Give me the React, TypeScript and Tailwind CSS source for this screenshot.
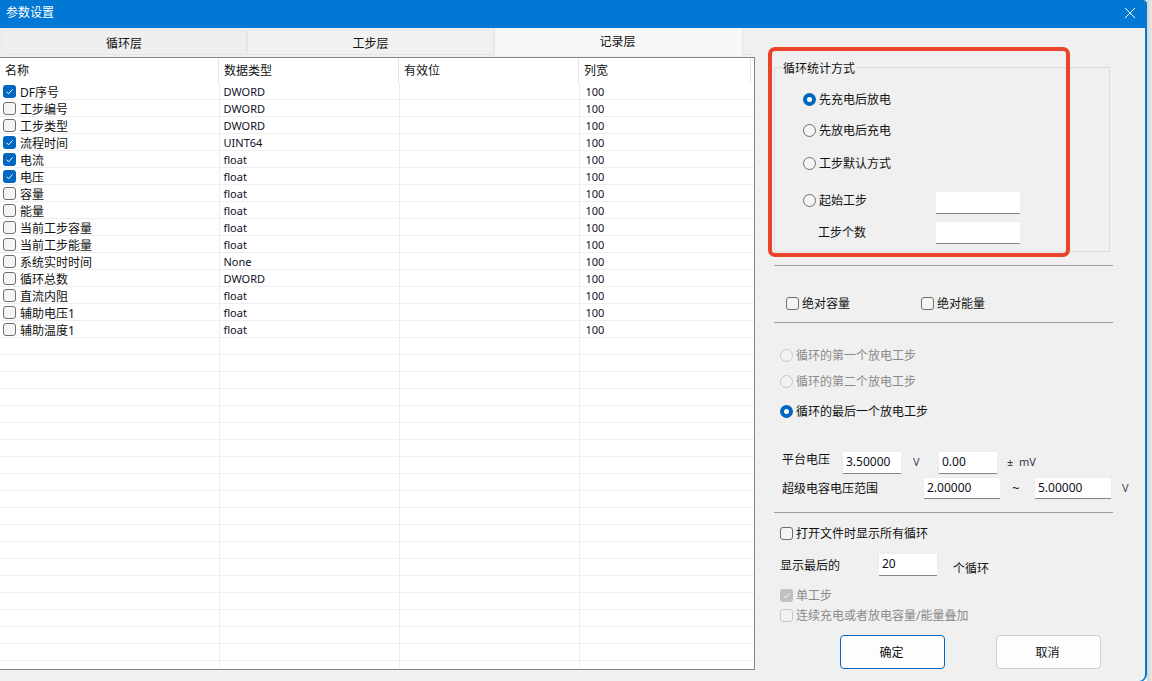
const rows: [string, string, boolean][] = [
  ["DF序号", "DWORD", true],
  ["工步编号", "DWORD", false],
  ["工步类型", "DWORD", false],
  ["流程时间", "UINT64", true],
  ["电流", "float", true],
  ["电压", "float", true],
  ["容量", "float", false],
  ["能量", "float", false],
  ["当前工步容量", "float", false],
  ["当前工步能量", "float", false],
  ["系统实时时间", "None", false],
  ["循环总数", "DWORD", false],
  ["直流内阻", "float", false],
  ["辅助电压1", "float", false],
  ["辅助温度1", "float", false],
];
const allRows = Array.from({ length: 35 }, (_, i) => rows[i] ?? null);

function Check({ on, off }: { on?: boolean; off?: boolean }) {
  if (on) {
    return (
      <span className={`flex h-[13px] w-[13px] shrink-0 items-center justify-center rounded-[3px] ${off ? "bg-[#c0c0c0]" : "bg-[#0067c0]"}`}>
        <svg width="9" height="9" viewBox="0 0 9 9" fill="none" stroke="#ffffff" strokeWidth="1">
          <path d="M1.5 4.7 L3.6 6.8 L7.6 2.4" />
        </svg>
      </span>
    );
  }
  return <span className={`h-[13px] w-[13px] shrink-0 rounded-[3px] border ${off ? "border-[#c8c8c8] bg-[#f2f2f2]" : "border-[#6f6f6f] bg-[#f5f5f5]"}`} />;
}

function Radio({ on, off }: { on?: boolean; off?: boolean }) {
  if (on) {
    return (
      <span className="flex h-[13px] w-[13px] shrink-0 items-center justify-center rounded-full bg-[#0067c0]">
        <span className="h-[5px] w-[5px] rounded-full bg-white" />
      </span>
    );
  }
  return <span className={`h-[13px] w-[13px] shrink-0 rounded-full border ${off ? "border-[#c8c8c8] bg-[#f2f2f2]" : "border-[#6f6f6f] bg-[#f5f5f5]"}`} />;
}

function Field({ w, h = "h-[22px]", value = "" }: { w: string; h?: string; value?: string }) {
  return (
    <div className={`${w} ${h} flex shrink-0 items-start border-b border-b-[#858585] bg-white pl-[3px] pt-[1px] leading-[17px] text-[#101020] shadow-[0_0_1px_#d8d8d8]`}>
      {value}
    </div>
  );
}

function Sep() {
  return <div className="h-px w-[339px] bg-[#a0a0a0]" />;
}

function Label({ children }: { children: React.ReactNode }) {
  return <span className="whitespace-nowrap pt-[2px]">{children}</span>;
}

export default function App() {
  return (
    <div className="flex h-[681px] w-[1152px] overflow-hidden bg-white font-['Noto_Sans','Noto_Sans_CJK_SC',sans-serif] text-[12px] text-[#111111]">
      <div className="flex h-[682px] w-[1147px] shrink-0 flex-col overflow-hidden rounded-tr-[4px] rounded-br-[8px] border-r-2 border-b border-[#0078d4] bg-[#f0f0f0]">
        <div className="flex h-[28px] shrink-0 items-center justify-between bg-[#0078d4] pb-[3px] pl-[6px] pr-[9px] text-white">
          <span className="leading-none">参数设置</span>
          <svg width="12" height="12" viewBox="0 0 12 12" stroke="#ffffff" strokeWidth="1" fill="none">
            <path d="M1 1 L11 11 M11 1 L1 11" />
          </svg>
        </div>
        <div className="relative flex min-h-0 flex-1">
          <div className="flex w-[755px] shrink-0 flex-col">
            <div className="flex h-[29px] shrink-0 items-end pl-px">
              <div className="mb-[2px] flex h-[25px] w-[246px] items-center justify-center border border-[#e6e6e6] bg-[#efefef] pt-[2px]">循环层</div>
              <div className="mb-[2px] flex h-[25px] w-[247px] items-center justify-center border border-[#e6e6e6] bg-[#f1f1f1] pt-[2px]">工步层</div>
              <div className="mb-[1px] flex h-[28px] w-[249px] items-center justify-center border-x border-[#e6e6e6] bg-[#f8f8f8] pr-[2px]">记录层</div>
              <div className="mb-[2px] h-px w-[10px] bg-[#e6e6e6]" />
            </div>
            <div className="h-[613px] shrink-0 overflow-hidden border-y border-r border-y-[#858585] border-r-[#858585] bg-white">
              <div className="flex h-[25px] items-center">
                {["名称", "数据类型", "有效位", "列宽"].map((t, i) => (
                  <div key={t} className={`flex h-full items-center border-r border-[#e5e5e5] pl-[5px] ${["w-[219px]", "w-[180px]", "w-[180px]", "w-[172px]"][i]}`}>
                    {t}
                  </div>
                ))}
              </div>
              {allRows.map((r, i) => (
                <div key={i} className="flex h-[17px] border-b border-[#efefef] text-[#10102a]">
                  <div className="flex w-[219.5px] shrink-0 items-center border-r border-[#efefef] pl-[3px] pt-px text-[#111111]">
                    {r && (
                      <>
                        <Check on={r[2]} />
                        <span className="ml-[4px] whitespace-nowrap pt-[2px]">{r[0]}</span>
                      </>
                    )}
                  </div>
                  <div className="flex w-[180px] shrink-0 items-center border-r border-[#efefef] pl-[4px] pt-[3px] text-[11px]">{r?.[1]}</div>
                  <div className="w-[180px] shrink-0 border-r border-[#efefef]" />
                  <div className="flex w-[171.5px] shrink-0 items-center pl-[6px] pt-[3px] text-[11px]">{r && "100"}</div>
                </div>
              ))}
            </div>
          </div>

          <div className="flex min-w-0 flex-1 flex-col pl-[19px]">
            <div className="relative mt-[39px] flex h-[185px] w-[336px] shrink-0 flex-col border border-[#dcdcdc]">
              <span className="absolute left-[7px] top-[-7px] bg-[#f0f0f0] px-[1px] leading-[16px]">循环统计方式</span>
              <div className="ml-[28px] mt-[23px] flex h-[16px] items-center gap-[3px]"><Radio on /><Label>先充电后放电</Label></div>
              <div className="ml-[28px] mt-[15px] flex h-[16px] items-center gap-[3px]"><Radio /><Label>先放电后充电</Label></div>
              <div className="ml-[28px] mt-[17px] flex h-[16px] items-center gap-[3px]"><Radio /><Label>工步默认方式</Label></div>
              <div className="ml-[28px] mt-[21px] flex h-[16px] items-start">
                <span className="flex h-[16px] items-center"><Radio /></span>
                <span className="ml-[3px] flex h-[16px] w-[117px] items-center"><Label>起始工步</Label></span>
                <Field w="w-[84px]" />
              </div>
              <div className="ml-[43px] mt-[14px] flex h-[22px] items-start">
                <span className="flex h-[22px] w-[118px] items-center">工步个数</span>
                <Field w="w-[84px]" />
              </div>
            </div>
            <div className="mt-[13px] shrink-0"><Sep /></div>
            <div className="ml-[12px] mt-[29px] flex h-[16px] shrink-0 items-center">
              <Check />
              <span className="ml-[3px] w-[119px] pt-[2px]">绝对容量</span>
              <Check />
              <span className="ml-[3px] pt-[2px]">绝对能量</span>
            </div>
            <div className="mt-[11px] shrink-0"><Sep /></div>
            <div className="ml-[6px] mt-[24px] flex h-[16px] shrink-0 items-center gap-[3px] text-[#8a8a8a]"><Radio off /><Label>循环的第一个放电工步</Label></div>
            <div className="ml-[6px] mt-[10px] flex h-[16px] shrink-0 items-center gap-[3px] text-[#8a8a8a]"><Radio off /><Label>循环的第二个放电工步</Label></div>
            <div className="ml-[6px] mt-[14px] flex h-[16px] shrink-0 items-center gap-[3px]"><Radio on /><Label>循环的最后一个放电工步</Label></div>

            <div className="ml-[8px] mt-[33px] flex h-[22px] shrink-0 items-center">
              <span className="w-[61px] pb-[6px]">平台电压</span>
              <Field w="w-[58px]" value="3.50000" />
              <span className="ml-[12px] w-[26px] pb-[2px] text-[11px] text-[#444466]">V</span>
              <Field w="w-[58px]" value="0.00" />
              <span className="ml-[10px] pb-[2px] text-[11px] text-[#333344]">±&nbsp;&nbsp;mV</span>
            </div>
            <div className="ml-[8px] mt-[4px] flex h-[21px] shrink-0 items-center">
              <span className="w-[142px]">超级电容电压范围</span>
              <Field w="w-[76px]" h="h-[21px]" value="2.00000" />
              <span className="ml-[12px] w-[23px] text-[13px]">~</span>
              <Field w="w-[76px]" h="h-[21px]" value="5.00000" />
              <span className="ml-[11px] text-[11px] text-[#444466]">V</span>
            </div>
            <div className="mt-[13px] shrink-0"><Sep /></div>
            <div className="ml-[6px] mt-[12px] flex h-[16px] shrink-0 items-center gap-[3px]"><Check /><Label>打开文件时显示所有循环</Label></div>
            <div className="ml-[6px] mt-[13px] flex h-[22px] shrink-0 items-center">
              <span className="w-[99px] pt-[1px]">显示最后的</span>
              <Field w="w-[58px]" value="20" />
              <span className="ml-[16px] mt-[7px]">个循环</span>
            </div>
            <div className="ml-[6px] mt-[11px] flex h-[16px] shrink-0 items-center gap-[3px] text-[#8a8a8a]"><Check on off /><Label>单工步</Label></div>
            <div className="ml-[6px] mt-[4px] flex h-[16px] shrink-0 items-center gap-[3px] text-[#8a8a8a]"><Check off /><Label>连续充电或者放电容量/能量叠加</Label></div>
            <div className="ml-[66px] mt-[12px] flex shrink-0 gap-[51px]">
              <div className="flex h-[34px] w-[105px] items-center justify-center rounded-[4px] border border-[#0067c0] bg-[#fdfdfd] pr-[2px] pt-[2px]">确定</div>
              <div className="flex h-[34px] w-[105px] items-center justify-center rounded-[4px] border border-[#d0d0d0] bg-[#fdfdfd] pr-[2px] pt-[2px]">取消</div>
            </div>
          </div>

          <div className="absolute left-[768px] top-[19px] h-[210px] w-[302px] rounded-[7px] border-[4px] border-[#ea432a]" />
        </div>
      </div>
      <div className="h-full flex-1 bg-linear-to-r from-[#d4d4d4] to-[#e8e8e8]" />
    </div>
  );
}
